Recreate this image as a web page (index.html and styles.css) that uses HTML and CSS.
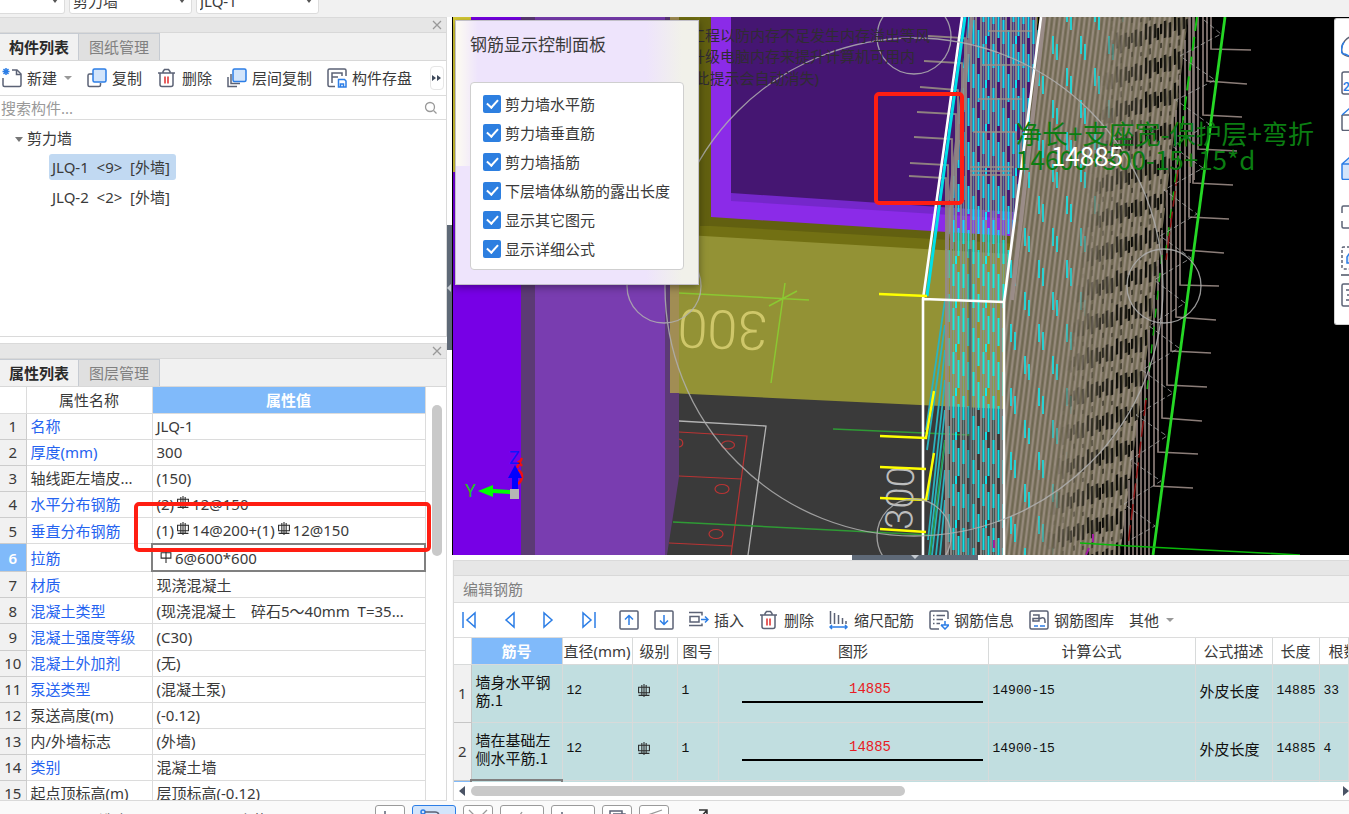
FILE: index.html
```html
<!DOCTYPE html>
<html lang="zh-CN">
<head>
<meta charset="utf-8">
<title>钢筋显示控制</title>
<link rel="stylesheet" href="styles.css">
</head>
<body>
<svg class="defs" aria-hidden="true">
  <symbol id="i-new" viewBox="0 0 20 20"><path d="M10 2h5l4 4v11a1.500 1.500 0 0 1-1.500 1.500h-15A1.500 1.500 0 0 1 1 17v-7" class="k"/><path d="M14.500 2v4.500H19" class="k"/><path d="M4 0v7M.500 3.500h7M1.500 1l5 5M6.500 1l-5 5" class="b"/></symbol>
  <symbol id="i-copy" viewBox="0 0 20 20"><path d="M6 6H2.500A1.500 1.500 0 0 0 1 7.500V17a1.500 1.500 0 0 0 1.500 1.500H12a1.500 1.500 0 0 0 1.500-1.500v-2" class="k"/><rect x="6" y="1" width="13" height="13" rx="1.500" class="b f"/></symbol>
  <symbol id="i-trash" viewBox="0 0 20 20"><path d="M1 5h17M6 5V3.500L7.500 1.500h4L13 3.500V5M3 5v11.500A2 2 0 0 0 5 18.500h9a2 2 0 0 0 2-2V5" class="k"/><path d="M8 8.500v7M11 8.500v7" class="r"/></symbol>
  <symbol id="i-layers" viewBox="0 0 20 20"><path d="M4 6v9.500h9M1 9v9.500h9" class="k"/><rect x="6" y="1" width="13" height="12.500" rx="1.500" class="b f"/></symbol>
  <symbol id="i-save" viewBox="0 0 20 20"><path d="M8 18.500H2.500A1.500 1.500 0 0 1 1 17V2.500A1.500 1.500 0 0 1 2.500 1h15A1.500 1.500 0 0 1 19 2.500V8M5 15V5h10v3M5 9h6" class="k"/><path d="M11.500 11.500h6l1.500 1.500v6h-7.500zM13.500 19v-3h3v3" class="b"/></symbol>
  <symbol id="i-first" viewBox="0 0 20 20"><path d="M4 2v16M16 3v14L8 10z" class="b"/></symbol>
  <symbol id="i-prev" viewBox="0 0 20 20"><path d="M15 3v14L7 10z" class="b"/></symbol>
  <symbol id="i-next" viewBox="0 0 20 20"><path d="M5 3v14l8-7z" class="b"/></symbol>
  <symbol id="i-last" viewBox="0 0 20 20"><path d="M4 3v14l8-7zM16 2v16" class="b"/></symbol>
  <symbol id="i-up" viewBox="0 0 20 20"><rect x="1" y="1" width="18" height="18" rx="1" class="k"/><path d="M10 15V6M6 9.500L10 5.500l4 4" class="b"/></symbol>
  <symbol id="i-down" viewBox="0 0 20 20"><rect x="1" y="1" width="18" height="18" rx="1" class="k"/><path d="M10 5v9M6 10.500l4 4 4-4" class="b"/></symbol>
  <symbol id="i-insert" viewBox="0 0 20 20"><path d="M0 2.500h13v3M0 15.500h13v-2M1 6.500h9v5.500H1z" class="k"/><path d="M12 9.500h7M16 6.500l3 3-3 3" class="b"/></symbol>
  <symbol id="i-scale" viewBox="0 0 20 20"><path d="M1.500 1v13M5.500 3v11M9.500 5v9M13.500 8v6M17 11v3" class="k"/><path d="M1 17h17M3 15l-2 2 2 2M16 15l2 2-2 2" class="b"/></symbol>
  <symbol id="i-info" viewBox="0 0 20 20"><path d="M10 19H2.500A1.500 1.500 0 0 1 1 17.500V2.500A1.500 1.500 0 0 1 2.500 1h15A1.500 1.500 0 0 1 19 2.500V9M4 5.500h1.500M7.500 5.500H16M4 9.500h1.500M7.500 9.500H14M4 13.500h1.500M7.500 13.500H11" class="k"/><path d="M16 11v4M12 15h8l-4 4-4-4" class="b"/></symbol>
  <symbol id="i-lib" viewBox="0 0 20 20"><rect x="1" y="1" width="18" height="18" rx="1.500" class="k"/><path d="M4 5h6v6H4V8.500h7c4-2 5 0 5 3V13" class="k"/><path d="M5 16h4M11 16h5" class="b"/></symbol>
  <symbol id="i-rebar" viewBox="0 0 12 12"><path d="M1 3h10v5H1zM4 1v9M8 1v9M6 0v12M1 10.500h10" class="n"/></symbol>
  <symbol id="i-rebar1" viewBox="0 0 12 12"><path d="M1.500 2.500h9v5h-9zM6 0v12" class="n"/></symbol>
  <symbol id="i-close" viewBox="0 0 10 10"><path d="M1 1l8 8M9 1L1 9" class="g"/></symbol>
</svg>

<header class="topbar">
  <select class="combo combo-a" aria-label="楼层"><option></option></select>
  <select class="combo" aria-label="构件类型"><option>剪力墙</option></select>
  <select class="combo" aria-label="构件"><option>JLQ-1</option></select>
</header>

<div class="workspace">
  <aside class="side">
    <section class="pane pane-list">
      <div class="strip"><button class="close" aria-label="关闭"><svg><use href="#i-close"/></svg></button></div>
      <nav class="tabs"><button class="tab on">构件列表</button><button class="tab">图纸管理</button></nav>
      <div class="tools">
        <button class="tool"><svg><use href="#i-new"/></svg>新建<i class="caret"></i></button>
        <button class="tool"><svg><use href="#i-copy"/></svg>复制</button>
        <button class="tool"><svg><use href="#i-trash"/></svg>删除</button>
        <button class="tool"><svg><use href="#i-layers"/></svg>层间复制</button>
        <button class="tool"><svg><use href="#i-save"/></svg>构件存盘</button>
        <button class="more" aria-label="更多"><svg viewBox="0 0 10 8"><path d="M0 1l4 3-4 3zM5 1l4 3-4 3z" fill="#3f4a5c"/></svg></button>
      </div>
      <label class="search"><input type="text" placeholder="搜索构件..." aria-label="搜索构件"><svg viewBox="0 0 14 14"><circle cx="6" cy="6" r="4.500" class="g"/><path d="M9.500 9.500l3 3" class="g"/></svg></label>
      <ul class="tree">
        <li><i class="caret big"></i>剪力墙
          <ul>
            <li><span class="node sel">JLQ-1&nbsp; &lt;9&gt;&nbsp; [外墙]</span></li>
            <li><span class="node">JLQ-2&nbsp; &lt;2&gt;&nbsp; [外墙]</span></li>
          </ul>
        </li>
      </ul>
    </section>

    <section class="pane pane-props">
      <div class="strip"><button class="close" aria-label="关闭"><svg><use href="#i-close"/></svg></button></div>
      <nav class="tabs"><button class="tab on">属性列表</button><button class="tab">图层管理</button></nav>
      <div class="props">
        <table class="ptable">
          <colgroup><col class="c-n"><col class="c-k"><col></colgroup>
          <thead><tr><th></th><th>属性名称</th><th class="hot">属性值</th></tr></thead>
          <tbody>
            <tr><th>1</th><td class="l">名称</td><td>JLQ-1</td></tr>
            <tr><th>2</th><td class="l">厚度(mm)</td><td>300</td></tr>
            <tr><th>3</th><td>轴线距左墙皮...</td><td>(150)</td></tr>
            <tr><th>4</th><td class="l">水平分布钢筋</td><td>(2)<svg class="rb"><use href="#i-rebar"/></svg>12@150</td></tr>
            <tr><th>5</th><td class="l">垂直分布钢筋</td><td>(1)<svg class="rb"><use href="#i-rebar"/></svg>14@200+(1)<svg class="rb"><use href="#i-rebar"/></svg>12@150</td></tr>
            <tr><th class="hot">6</th><td class="l">拉筋</td><td class="edit"><svg class="rb"><use href="#i-rebar1"/></svg>6@600*600</td></tr>
            <tr><th>7</th><td class="l">材质</td><td>现浇混凝土</td></tr>
            <tr><th>8</th><td class="l">混凝土类型</td><td>(现浇混凝土　碎石5～40mm&nbsp; T=35...</td></tr>
            <tr><th>9</th><td class="l">混凝土强度等级</td><td>(C30)</td></tr>
            <tr><th>10</th><td class="l">混凝土外加剂</td><td>(无)</td></tr>
            <tr><th>11</th><td class="l">泵送类型</td><td>(混凝土泵)</td></tr>
            <tr><th>12</th><td>泵送高度(m)</td><td>(-0.12)</td></tr>
            <tr><th>13</th><td>内/外墙标志</td><td>(外墙)</td></tr>
            <tr><th>14</th><td class="l">类别</td><td>混凝土墙</td></tr>
            <tr><th>15</th><td>起点顶标高(m)</td><td>层顶标高(-0.12)</td></tr>
          </tbody>
        </table>
        <div class="vscroll"><span></span></div>
        <div class="redmark"></div>
      </div>
    </section>
  </aside>

  <div class="vsplit"><span><svg viewBox="0 0 5 8"><path d="M4 0v8L0 4z" fill="#c3c9d0"/></svg></span></div>

  <main class="stage">
    <div class="view">
      <svg class="scene" viewBox="452 17 897 538" preserveAspectRatio="xMinYMin slice">
        <defs>
          <pattern id="pa" width="30" height="44" patternUnits="userSpaceOnUse">
            <path d="M1 0v44M6 0v44M11 0v44M16 0v44M21 0v44M26 0v44" stroke="#8f8886" stroke-width="2"/>
            <path d="M3.500 0v44M13.500 0v44M23.500 0v44" stroke="#6fa9a6" stroke-width="1.600" opacity=".8"/>
            <path d="M3.500 0v24M8.500 10v28M13.500 20v24M18.500 0v14M18.500 30v14M23.500 0v22M28.500 8v28M26 36v8" stroke="#0cf0f6" stroke-width="2"/>
          </pattern>
          <pattern id="pb" width="5" height="20" patternUnits="userSpaceOnUse" patternTransform="skewX(-7)">
            <path d="M0 0h5v20H0z" fill="#6d664f"/><path d="M2 0v20" stroke="#968a7c" stroke-width="2.600"/>
          </pattern>
          <pattern id="pc" width="28" height="64" patternUnits="userSpaceOnUse">
            <path d="M3 4v18M7 12v18M17 36v18M21 44v16" stroke="#18e0e4" stroke-width="1.700"/>
          </pattern>
          <pattern id="pd" width="29" height="34" patternUnits="userSpaceOnUse" patternTransform="skewY(-17)">
            <path d="M1 5v10M5 3v17M10 6v15M15 0v16M19 4v18M24 3v14M27 8v12" stroke="#0a0a06" stroke-width="2.200"/>
            <path d="M1 24v5M10 27v4M19 26v6" stroke="#2c291c" stroke-width="1.400"/>
          </pattern>
          <linearGradient id="g1" gradientUnits="userSpaceOnUse" x1="1076" y1="280" x2="1125" y2="286"><stop offset="0" stop-color="#000"/><stop offset="1" stop-color="#fff"/></linearGradient>
          <mask id="m1" maskUnits="userSpaceOnUse" x="990" y="0" width="240" height="570"><path d="M990 0h240v570H990z" fill="url(#g1)"/></mask>
          <linearGradient id="g2" gradientUnits="userSpaceOnUse" x1="1030" y1="280" x2="1090" y2="288"><stop offset=".6" stop-color="#fff"/><stop offset="1" stop-color="#000"/></linearGradient>
          <mask id="m2" maskUnits="userSpaceOnUse" x="990" y="0" width="240" height="570"><path d="M990 0h240v570H990z" fill="url(#g2)"/></mask>
          <clipPath id="cd"><path d="M679 17H922V555H679z"/></clipPath>
          <clipPath id="ce"><path d="M697 17H1000V100H697z"/></clipPath>
        </defs>
        <path d="M452 17H1349V555H452z" fill="#000"/>
        <!-- slab and floor -->
        <path d="M669 380L1004 398V555H660z" fill="#3a3a3a"/>
        <path d="M669 17H1038L1010 260L1004 409L669 393z" fill="#939235"/>
        <path d="M669 17H1038L1010 254L669 234z" fill="#727013"/>
        <path d="M700 17H1038L1018 244L711 226H700z" fill="#626010"/>
        <path d="M711 17H1036L1025 237L711 217z" fill="#8b2be8"/>
        <path d="M731 17H1036L1030 220L731 201z" fill="#7527cb"/>
        <path d="M731 17H1036L1030 213L731 193z" fill="#451672"/>
        <!-- columns -->
        <path d="M453 17H521V555H453z" fill="#7700e6"/>
        <path d="M453 17H471V172H453z" fill="#d8cc35"/>
        <path d="M521 17H535V555H521z" fill="#5c3a75"/>
        <path d="M535 17H665V555H535z" fill="#793db0"/>
        <path d="M665 17H679V477L667 555H665z" fill="#5c3a75"/>
        <path d="M670 17H679V393H670z" fill="#a18d54"/>
        <!-- drafting lines -->
        <g fill="none" stroke="#8bc832" stroke-width="1.500"><path d="M679 293L809 300M785 283L771 383M769 306L797 291"/></g>
        <g clip-path="url(#cd)"><text class="cad" x="0" y="0" fill="#cfc76a" transform="translate(768 312) rotate(182)">300</text></g>
        <text class="cad small" x="0" y="0" fill="#bdbdbd" transform="translate(912 530) rotate(-88)">300</text>
        <path d="M679 421L766 426L748 555" fill="none" stroke="#b4b4b4" stroke-width="1.300"/>
        <g fill="none" stroke="#b93434" stroke-width="1.200"><path d="M679 432L747 436L731 555M679 476L742 479M669 543L732 546"/><ellipse cx="728" cy="445" rx="6.500" ry="4"/><ellipse cx="722" cy="489" rx="7" ry="4.500"/><ellipse cx="716" cy="534" rx="7" ry="4.500"/><path d="M679 439c5 1 5 7 0 8"/></g>
        <path d="M833 429L970 435M673 522L930 535" stroke="#2f9a35" stroke-width="1.500"/>
        <!-- bars fanning to the left face -->
        <path d="M945 300L926 430M945 325L927 450M945 350L928 500M945 380L928 540M945 410L929 555M945 440L932 555M945 470L936 555M945 500L940 555" stroke="#2bb3be" stroke-width="1.800"/>
        <path d="M945 440L930 555" stroke="#2c9b4a" stroke-width="1.500"/>
        <path d="M968 17H1041L1004 302V555H945V249z" fill="url(#pa)" opacity=".92"/>
        <path d="M972 17L947 240V555M969 40L950 200" fill="none" stroke="#968a86" stroke-width="4" opacity=".8"/>
        <path d="M970 249V555" stroke="#3e5a66" stroke-width="3" opacity=".7"/>
        <path d="M988 31h44M982 65h44M978 99h44M973 132h44M970 167h44M970 171h42M970 175h42" stroke="#9c8e88" stroke-width="1.500"/>
        <g fill="none" stroke="#8f8180" stroke-width="1.800"><path d="M928 36L965 38V110M924 61L962 63V140M920 87L958 90V160M917 112L956 114V240M914 137L952 139V249M910 163L948 165V249M909 176L946 178V249"/></g>
        <!-- wall mesh -->
        <path d="M1041 17H1188L1154 300L1120 555H1004V302z" fill="url(#pb)"/>
        <path d="M1041 17H1125L1070 555H1004V302z" fill="url(#pc)" mask="url(#m2)"/>
        <path d="M1090 17H1188L1154 300L1120 555H1030z" fill="url(#pd)" mask="url(#m1)"/>
        <path d="M1044 17L1012 300" stroke="#9a8c88" stroke-width="4"/>
        <g stroke="#8b7d78" stroke-width="1.700" fill="none">
          <path d="M1194 17V180M1198 17V149L1237 151M1203 17V115L1242 117M1207 17V81L1247 84M1211 17V49L1251 50M1190 17V183M1193 17V183L1233 185M1189 17V217L1229 219M1185 40V250L1224 253M1180 75V285L1219 286M1176 110V317L1216 320M1171 150V351L1211 353M1167 190V385L1207 387M1162 230V418L1202 421M1158 260V452L1198 454M1154 295V486L1193 488M1149 330V555M1145 360V555M1141 390V555M1137 420V555M1133 450V555M1129 480V555M1125 510V555"/>
        </g>
        <path d="M1197 17L1183 120" stroke="#13c413" stroke-width="2" stroke-dasharray="14 6"/>
        <path d="M1183 120L1166 250M1162 255L1146 400" stroke="#13a813" stroke-width="1.500" stroke-dasharray="9 9"/>
        <path d="M1178 170L1166 260M1146 400L1128 545" stroke="#8c1414" stroke-width="1.500" stroke-dasharray="16 5"/>
        <path d="M1204 20L1221 34L1180 56L1215 80L1176 100L1209 124L1172 146L1203 168L1164 190L1197 214L1160 236L1191 258L1154 280L1185 303L1149 326L1179 348L1142 370L1173 393L1136 415L1167 436L1130 460L1161 481L1124 504L1155 526L1130 540" fill="none" stroke="#a8a8a8" stroke-width="1" stroke-dasharray="5 3" opacity=".75"/>
        <path d="M1225 17L1153 555" stroke="#25d825" stroke-width="2.800"/>
        <path d="M1080 543L1130 546L1300 555" stroke="#09b909" stroke-width="1.600" fill="none"/>
        <path d="M1093 534v8M1089 548l-3 7M994 540v8" stroke="#a01ca0" stroke-width="2"/>
        <!-- wall frame -->
        <path d="M965 17L927 296" stroke="#00dfe8" stroke-width="3"/>
        <path d="M962 17L923 299V555M1041 17L1004 302V555M923 299L1004 302" fill="none" stroke="#fff" stroke-width="2.600"/>
        <g fill="none" stroke="#ff0" stroke-width="2.400"><path d="M879 294L927 296M880 436L926 438L934 391M880 467L926 469M880 498L926 500L934 453M880 529L926 532"/></g>
        <g fill="none" stroke="#b0b0b0" stroke-width="1.300" opacity=".85"><circle cx="914" cy="287" r="249"/><circle cx="914" cy="37" r="37"/><circle cx="664" cy="286" r="37"/><circle cx="1164" cy="286" r="37"/><circle cx="914" cy="536" r="37"/></g>
        <!-- axes -->
        <path d="M518 461l4 5M522 458l-5 10M518 470c6 3 5 10 0 14" stroke="#f01010" stroke-width="2.500" fill="none"/>
        <path d="M515 465l7 13h-4v13h-6v-13h-4z" fill="#00f"/><path d="M478 491l15-6v4l17 1v4l-17-1v4z" fill="#0f0"/><path d="M510 489h9v10h-9z" fill="#b5b5b5"/>
        <text class="axis" x="509" y="464" fill="#1212ff">Z</text><text class="axis" x="465" y="497" fill="#24c424">Y</text>
        <g class="hint" clip-path="url(#ce)"><text x="690" y="41">工程以防内存不足发生内存溢出等风</text><text x="690" y="62">升级电脑内存来提升计算机可用内</text><text x="690" y="84">(此提示会自动消失)</text></g>
        <g class="formula"><text x="1016" y="144">净长+支座宽-保护层+弯折</text><text x="1016" y="170">14600+300-15+15*d</text><text class="len" x="1051" y="166">14885</text></g>
        <rect x="876" y="94" width="86" height="109" rx="3" fill="none" stroke="#ff1e12" stroke-width="4"/>
      </svg>

      <section class="popup">
        <h2>钢筋显示控制面板</h2>
        <div class="checks">
          <label><input type="checkbox" checked>剪力墙水平筋</label>
          <label><input type="checkbox" checked>剪力墙垂直筋</label>
          <label><input type="checkbox" checked>剪力墙插筋</label>
          <label><input type="checkbox" checked>下层墙体纵筋的露出长度</label>
          <label><input type="checkbox" checked>显示其它图元</label>
          <label><input type="checkbox" checked>显示详细公式</label>
        </div>
      </section>

      <nav class="dock">
        <button aria-label="动态观察"><svg viewBox="0 0 24 24"><path d="M1 17C-1 9 6 0 16 1M1 17c2 5 6 4 10 5" class="k"/><path d="M3 7C-1 14 0 19 3 19s5 3 12 4" class="b"/></svg></button>
        <button aria-label="二维"><svg viewBox="0 0 24 24"><rect x="1" y="1" width="30" height="22" rx="2" class="k"/><text x="2" y="20">2D</text></svg></button>
        <button class="wide" aria-label="三维"><svg viewBox="0 0 24 24"><path d="M1 8v14a1.500 1.500 0 0 0 1.500 1.500H24M1 8h23" class="k"/><path d="M1 8l8-7h15" class="b"/></svg></button>
        <button class="wide" aria-label="着色"><svg viewBox="0 0 24 24"><path d="M1 8l8-7h18v22.500H2.500A1.500 1.500 0 0 1 1 22zM1 8h23" class="b f"/></svg></button>
        <button aria-label="全屏"><svg viewBox="0 0 24 24"><path d="M24 1H2.500A1.500 1.500 0 0 0 1 2.500V8M1 16v5.500A1.500 1.500 0 0 0 2.500 23H24" class="k"/></svg></button>
        <button class="sep" aria-label="框选"><svg viewBox="0 0 24 24"><path d="M24 1H2.500A1.500 1.500 0 0 0 1 2.500v19A1.500 1.500 0 0 0 2.500 23H24" class="k" stroke-dasharray="3 2"/><path d="M12 8H8l-2 3v6h8" class="b f"/></svg></button>
        <button aria-label="列表"><svg viewBox="0 0 24 24"><path d="M24 1H2.500A1.500 1.500 0 0 0 1 2.500v19A1.500 1.500 0 0 0 2.500 23H24M5 7h15M6 12h14M5 17h15" class="k"/></svg></button>
      </nav>
    </div>

    <div class="hsplit"><span><svg viewBox="0 0 8 5"><path d="M0 0h8L4 4z" fill="#c3c9d0"/></svg></span></div>

    <section class="editor">
      <div class="strip"></div>
      <h2 class="etitle">编辑钢筋</h2>
      <div class="tools etools">
        <div class="nav">
          <button class="tool" aria-label="首行"><svg><use href="#i-first"/></svg></button>
          <button class="tool" aria-label="上一行"><svg><use href="#i-prev"/></svg></button>
          <button class="tool" aria-label="下一行"><svg><use href="#i-next"/></svg></button>
          <button class="tool" aria-label="末行"><svg><use href="#i-last"/></svg></button>
          <button class="tool" aria-label="上移"><svg><use href="#i-up"/></svg></button>
        </div>
        <button class="tool" aria-label="下移"><svg><use href="#i-down"/></svg></button>
        <button class="tool"><svg><use href="#i-insert"/></svg>插入</button>
        <button class="tool"><svg><use href="#i-trash"/></svg>删除</button>
        <button class="tool"><svg><use href="#i-scale"/></svg>缩尺配筋</button>
        <button class="tool"><svg><use href="#i-info"/></svg>钢筋信息</button>
        <button class="tool"><svg><use href="#i-lib"/></svg>钢筋图库</button>
        <button class="tool">其他<i class="caret"></i></button>
      </div>
      <div class="rows">
        <table class="etable">
          <colgroup><col class="e0"><col class="e1"><col class="e2"><col class="e3"><col class="e4"><col class="e5"><col class="e6"><col class="e7"><col class="e8"><col></colgroup>
          <thead><tr><th></th><th class="hot">筋号</th><th>直径(mm)</th><th>级别</th><th>图号</th><th>图形</th><th>计算公式</th><th>公式描述</th><th>长度</th><th class="cut">根数</th></tr></thead>
          <tbody>
            <tr><th>1</th><td class="zh">墙身水平钢筋.1</td><td>12</td><td><svg class="rb"><use href="#i-rebar"/></svg></td><td>1</td><td class="shape"><span>14885</span></td><td>14900-15</td><td class="zh">外皮长度</td><td>14885</td><td>33</td></tr>
            <tr><th>2</th><td class="zh">墙在基础左侧水平筋.1</td><td>12</td><td><svg class="rb"><use href="#i-rebar"/></svg></td><td>1</td><td class="shape"><span>14885</span></td><td>14900-15</td><td class="zh">外皮长度</td><td>14885</td><td>4</td></tr>
            <tr><th class="hot"></th><td class="edit"></td><td></td><td></td><td></td><td></td><td></td><td></td><td></td><td></td></tr>
          </tbody>
        </table>
      </div>
      <div class="hscroll"><svg viewBox="0 0 6 10"><path d="M6 0v10L0 5z" fill="#4a5365"/></svg><span></span><svg class="end" viewBox="0 0 6 10"><path d="M0 0v10l6-5z" fill="#4a5365"/></svg></div>
    </section>
  </main>
</div>

<footer class="status">
  <span class="s1">选中图元:</span><span class="s2">隐藏图元:</span>
  <div class="sbtns">
    <button class="sb" aria-label="正交"><svg viewBox="0 0 20 12"><path d="M5 5v7" class="k"/></svg></button>
    <button class="sb on w" aria-label="捕捉"><svg viewBox="0 0 30 12"><circle cx="4" cy="6" r="2" class="b"/><path d="M6 6h10q4 0 4 4v2M4 8v4" class="k"/></svg></button>
    <button class="sb" aria-label="交点"><svg viewBox="0 0 20 12"><path d="M1 4l7 7M19 4l-7 7" class="g"/></svg></button>
    <button class="sb w" aria-label="垂点"><svg viewBox="0 0 20 12"><path d="M10 6L6 12" class="g"/></svg></button>
    <button class="sb w" aria-label="坐标"><svg viewBox="0 0 30 12"><path d="M4 6v6" class="k"/></svg></button>
    <button class="sb" aria-label="复制"><svg viewBox="0 0 20 12"><path d="M3 12V5h12v7M6 8h12v4" class="k"/></svg></button>
    <button class="sb" aria-label="角度"><svg viewBox="0 0 20 12"><path d="M1 10L18 4M11 12V8M4 9l10 1" class="g"/></svg></button>
  </div>
  <svg class="arrow" viewBox="0 0 12 12"><path d="M2 5h8v7M10 5L4 12" fill="none" stroke="#333" stroke-width="1.500"/></svg>
</footer>
</body>
</html>
```
FILE: styles.css
```css
* { box-sizing: border-box; }
body {
  margin: 0; height: 100vh; display: flex; flex-direction: column; overflow: hidden;
  background: #fafafa; color: #3a3a3a;
  font: 15px/20px "Noto Sans", "Noto Sans CJK SC", sans-serif;
}
button { font: inherit; color: inherit; background: none; border: 0; padding: 0; margin: 0; }
h2 { margin: 0; font-weight: normal; }
ul { list-style: none; margin: 0; padding: 0; }
table { border-collapse: collapse; table-layout: fixed; width: 100%; }
th, td { font-weight: normal; padding: 0; white-space: nowrap; overflow: hidden; }
.defs { position: absolute; width: 0; height: 0; }
.k { fill: none; stroke: #5b6275; stroke-width: 1.5; }
.b { fill: none; stroke: #2c7ee6; stroke-width: 1.5; }
.b.f { fill: #d3e5fb; }
.r { fill: none; stroke: #e02b2b; stroke-width: 1.5; }
.n { fill: none; stroke: #2c2c2c; stroke-width: 1; }
.g { fill: none; stroke: #999; stroke-width: 1.3; }

.topbar { flex: none; height: 17px; background: #f1f1f1; display: flex; align-items: flex-end; gap: 4px; padding-bottom: 3px; overflow: hidden; }
.combo {
  appearance: none; flex: none; width: 123px; height: 26px; padding: 0 3px;
  border: 1px solid #dcdcdc; border-radius: 3px; color: #3a3a3a; font: inherit;
  background: #fff url("data:image/svg+xml,%3Csvg xmlns='http://www.w3.org/2000/svg' viewBox='0 0 6 4'%3E%3Cpath d='M0 0h6L3 4z' fill='%23555'/%3E%3C/svg%3E") no-repeat right 6px center / 6px 4px;
}
.combo-a { width: 65px; border-left: 0; border-radius: 0 3px 3px 0; }

.workspace { flex: 1; min-height: 0; display: flex; }
.side { flex: none; width: 447px; display: flex; flex-direction: column; gap: 6px; background: #fff; }
.pane { display: flex; flex-direction: column; background: #fff; border: 1px solid #dadada; border-left: 0; }
.pane-list { height: 320px; flex: none; }
.pane-props { flex: 1; min-height: 0; }
.strip { flex: none; height: 15px; background: #e6e6e6; border-bottom: 1px solid #d8d8d8; display: flex; justify-content: flex-end; align-items: center; padding-right: 4px; }
.close { width: 10px; height: 10px; display: flex; }
.close svg { width: 10px; height: 10px; }
.tabs { flex: none; height: 28px; display: flex; background: #f1f1f1; border-bottom: 1px solid #d8d8d8; }
.tab { width: 81px; color: #808080; background: #e0e0e0; border: 1px solid #c6cbd2; border-width: 1px 1px 0 0; }
.tab.on { width: 79px; color: #2a2a2a; background: #f1f1f1; font-weight: 600; }
.tools { flex: none; height: 35px; display: flex; align-items: center; gap: 15px; padding-left: 2px; border-bottom: 1px solid #dcdcdc; white-space: nowrap; }
.tool { display: flex; align-items: center; gap: 5px; }
.tool svg { width: 20px; height: 20px; flex: none; }
.caret { border: 4px solid transparent; border-top: 4px solid #999; border-bottom: 0; margin-left: 2px; }
.caret.big { border-width: 5px 4px 0; border-top-color: #777; margin: 0 4px 0 0; display: inline-block; vertical-align: middle; }
.more { width: 14px; height: 24px; margin-left: 3px; border: 1px solid #e6e6e6; border-radius: 4px; display: flex; align-items: center; justify-content: center; }
.more svg { width: 10px; height: 8px; flex: none; }
.search { flex: none; height: 24px; display: flex; align-items: center; border-bottom: 1px solid #dcdcdc; padding-right: 8px; }
.search input { flex: 1; border: 0; outline: 0; padding: 0 0 0 1px; font: inherit; }
.search input::placeholder { color: #999; }
.search svg { width: 14px; height: 14px; }
.tree { padding: 7px 0 0 15px; }
.tree > li { line-height: 22px; }
.tree ul { padding: 3px 0 0 34px; }
.tree ul li { height: 30px; display: flex; align-items: center; }
.node { height: 26px; line-height: 26px; padding: 0 6px 0 3px; border-radius: 3px; }
.node.sel { background: #c1d9f2; }

.props { position: relative; flex: 1; min-height: 0; display: flex; overflow: hidden; }
.ptable { height: 420px; width: 426px; flex: none; align-self: flex-start; }
.c-n { width: 26px; } .c-k { width: 126px; }
.ptable thead th { height: 26px; }
.ptable th, .ptable td { border: 1px solid #dcdcdc; border-top: 0; line-height: 20px; }
.ptable tbody th { background: #f1f1f1; border-left: 0; border-color: #ccc; }
.ptable th:first-child { border-left: 0; }
.ptable td { padding-left: 4px; }
.ptable .l { color: #2563f0; }
.ptable .hot, .etable .hot { background: #80bafa; color: #fff; font-weight: 600; }
.ptable tbody .hot { background: #80bafa; }
.ptable .edit { border: 2px solid #808080; }
.rb { width: 14px; height: 13px; vertical-align: 1px; margin: 0 2px; }
.vscroll { padding: 18px 0 0 6px; }
.vscroll span { display: block; width: 10px; height: 151px; border-radius: 5px; background: #c9c9c9; }
.redmark { position: absolute; left: 134px; top: 115px; width: 297px; height: 50px; border: 4px solid #ff1e12; border-radius: 5px; }

.vsplit { flex: none; width: 5px; background: #fff; padding-top: 208px; }
.vsplit span { display: flex; align-items: center; height: 125px; background: #5e6977; }
.vsplit svg { width: 5px; height: 8px; }
.stage { flex: 1; min-width: 0; display: flex; flex-direction: column; }
.view { position: relative; flex: 1; min-height: 0; overflow: hidden; background: #000; }
.scene { display: block; width: 100%; height: 100%; }
.cad { font: 300 54px Roboto, sans-serif; }
.cad.small { font-size: 38px; }
.axis { font: 18px Roboto, sans-serif; }
.hint { font-size: 15px; fill: #302c33; }
.formula { font: 26px "Noto Sans CJK SC", sans-serif; fill: #0b7d12; }
.formula .len { fill: #fff; }

.popup {
  position: absolute; left: 3px; top: 3px; width: 244px; padding: 14px 14px 14px;
  border: 1px solid #c2c0c8; box-shadow: 0 2px 8px rgba(0, 0, 0, .4);
  background: linear-gradient(90deg, rgba(255, 255, 240, .9), rgba(255, 255, 240, 0) 22px) 0 0 / 100% 145px no-repeat, linear-gradient(90deg, #eee4fc 0 190px, #f1f1ea 226px);
}
.popup h2 { font-size: 17px; line-height: 20px; padding-bottom: 27px; }
.checks { background: #fff; border: 1px solid #cfcfcf; border-radius: 4px; padding: 6px 12px; }
.checks label { display: flex; align-items: center; gap: 4px; height: 29px; white-space: nowrap; }
.checks input { appearance: none; flex: none; width: 18px; height: 18px; margin: 0; border-radius: 2px; background: #2d7fe0; display: grid; place-items: center; }
.checks input::after { content: ""; width: 5px; height: 9px; border: solid #fff; border-width: 0 2px 2px 0; transform: rotate(42deg); margin-bottom: 3px; }

.dock { position: absolute; right: 0; top: 1px; width: 15px; padding: 16px 0 17px 6px; overflow: hidden; background: #fff; border: 1px solid #d0d0d0; border-right: 0; border-radius: 3px 0 0 3px; }
.dock button { display: block; width: 24px; height: 24px; margin-bottom: 12px; }
.dock .wide { margin-bottom: 25px; }
.dock .sep { height: 35px; margin-bottom: 7px; border-bottom: 2px solid #777d8a; }
.dock button:last-child { margin-bottom: 0; }
.dock svg { display: block; width: 24px; height: 24px; }
.dock text { font: 600 12px Roboto, sans-serif; fill: #2c7ee6; }

.hsplit { flex: none; height: 5px; background: #fff; padding-left: 400px; }
.hsplit span { display: flex; justify-content: center; width: 126px; height: 5px; background: #5e6977; }
.hsplit svg { width: 8px; height: 5px; }

.editor { flex: none; margin-left: 1px; background: #fff; border: 1px solid #dadada; border-right: 0; }
.etitle { height: 27px; font-size: 15px; line-height: 26px; padding-left: 9px; color: #808080; background: #f1f1f1; border-bottom: 1px solid #dcdcdc; }
.etools { padding-left: 5px; }
.nav { display: flex; gap: 20px; }
.rows { height: 144px; overflow: hidden; }
.e0 { width: 17px; } .e1 { width: 91px; } .e2 { width: 70px; } .e3 { width: 45px; } .e4 { width: 41px; }
.e5 { width: 270px; } .e6 { width: 207px; } .e7 { width: 77px; } .e8 { width: 47px; }
.etable th, .etable td { border: 1px solid #d8dada; border-top: 0; }
.etable th { border-left: 0; }
.etable thead th { height: 26px; }
.etable .cut { text-align: left; padding-left: 9px; text-overflow: clip; }
.etable tbody tr { height: 58px; }
.etable tbody th { background: #f1f1f1; border-color: #c6c6c6; }
.etable tbody .hot { background: #80bafa; }
.etable td { background: #c1dee0; color: #111; padding: 0 0 4px 4px; font: 13px/18px "Liberation Mono", monospace; }
.etable td.zh { font: 15px/18px "Noto Sans CJK SC", sans-serif; white-space: normal; }
.etable td.edit { border: 2px solid #808080; }
.etable .rb { vertical-align: middle; margin: 0; }
.etable .shape { padding: 0 5px 8px 23px; }
.shape span { display: block; color: #e81c24; font-size: 14px; text-align: center; padding: 4px 0 2px 16px; border-bottom: 2px solid #000; line-height: 20px; }
.hscroll { height: 18px; display: flex; align-items: center; padding-left: 5px; gap: 6px; }
.hscroll svg { width: 6px; height: 10px; flex: none; }
.hscroll span { width: 434px; height: 10px; border-radius: 5px; background: #c9c9c9; }
.hscroll .end { margin-left: auto; }

.status { flex: none; height: 13px; overflow: hidden; display: flex; align-items: flex-start; background: #fafafa; padding: 4px 0 0 99px; color: #555; }
.status span { padding-top: 5px; white-space: nowrap; width: 138px; }
.sbtns { display: flex; gap: 7px; }
.sb { width: 30px; height: 24px; border: 1px solid #9a9a9a; border-radius: 3px; background: #fff; display: flex; justify-content: center; }
.sb.w { width: 44px; }
.sb.on { border-color: #2c7ee6; background: #d3e5fb; }
.sb svg { width: 20px; height: 12px; }
.sb.w svg { width: 30px; }
.arrow { width: 12px; height: 12px; margin-left: 28px; flex: none; }
```
